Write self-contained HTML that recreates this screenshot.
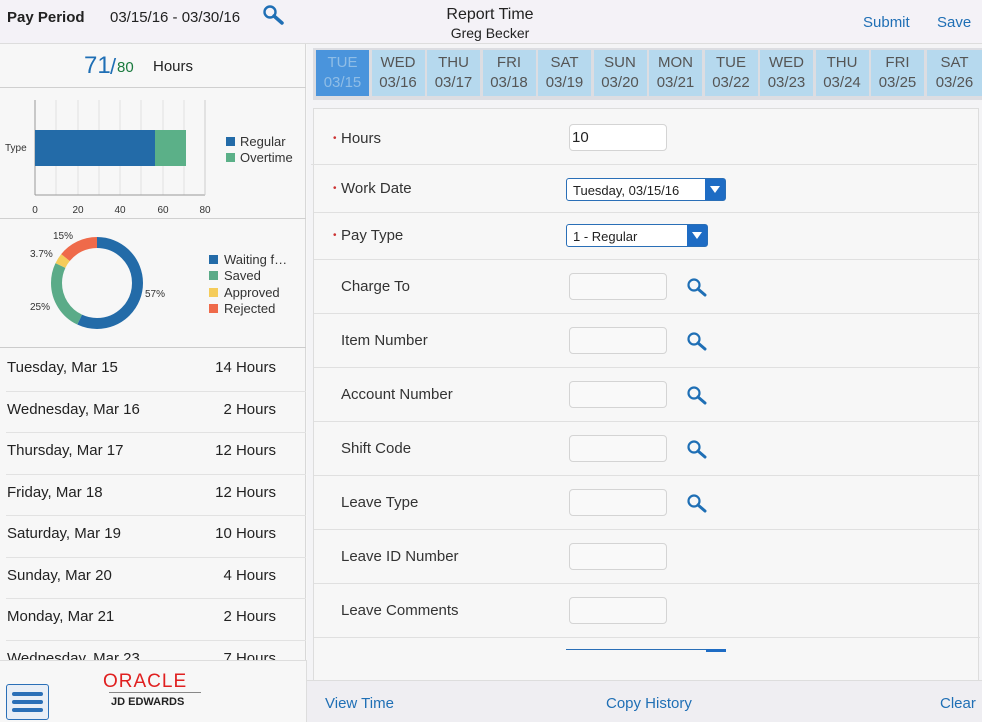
<!DOCTYPE html>
<html><head><meta charset="utf-8"><style>
*{margin:0;padding:0;box-sizing:border-box}
body{width:982px;height:722px;overflow:hidden;background:#f7f7f7;font-family:"Liberation Sans",Arial,sans-serif;color:#222;position:relative}
.a{position:absolute}
.hdr{left:0;top:0;width:982px;height:44px;background:#f4f2f7;border-bottom:1px solid #ddd}
.left{left:0;top:44px;width:306px;height:616px;background:#f7f7f7;border-right:1px solid #d8d8d8}
.row{position:absolute;left:0;width:306px;height:41.5px;font-size:15px}
.row span{position:absolute;top:9px}
.row:after{content:"";position:absolute;left:6px;right:0;bottom:0;border-bottom:1px solid #e2e2e2}
.tile{position:absolute;top:50px;width:53px;height:46px;background:#b6d9ee;color:#555;font-size:15px;text-align:center;line-height:20px;padding-top:3px}
.form{left:313px;top:108px;width:666px;height:580px;border:1px solid #ddd;border-bottom:none;background:#f7f7f7}
.fl{position:absolute;left:27px;font-size:15px;color:#333}
.req{position:absolute;left:19px;color:#c33;font-size:10px}
.sep{position:absolute;left:0;width:666px;border-top:1px solid #e0e0e0}
.inp{position:absolute;left:255px;width:98px;height:27px;border:1px solid #d4d4d4;border-radius:4px;background:#f9f9f9}
.sel{position:absolute;left:252px;height:23px;border:1px solid #2a6fb7;border-radius:3px;background:#fff;font-size:13px;padding:4px 6px}
.sel b{position:absolute;right:0;top:0;width:20px;height:21px;background:#1e6cc4}
.sel b:after{content:"";position:absolute;left:5px;top:7px;border-left:5px solid transparent;border-right:5px solid transparent;border-top:7px solid #fff}
.srch{position:absolute;left:372px}
.foot{left:307px;top:680px;width:675px;height:42px;background:#efeef2;border-top:1px solid #ddd}
.foot span{position:absolute;top:14px;color:#1f6fb5;font-size:15px}
</style></head><body>
<div class="a hdr">
 <div class="a" style="left:7px;top:9px;font-size:15px;font-weight:bold">Pay Period</div>
 <div class="a" style="left:110px;top:9px;font-size:15px">03/15/16 - 03/30/16</div>
 <svg class="a" style="left:262px;top:4px" width="24" height="22"><circle cx="8" cy="8" r="5.5" fill="none" stroke="#1f6fb5" stroke-width="2.4"/><line x1="12" y1="12" x2="20" y2="19" stroke="#1f6fb5" stroke-width="3.5" stroke-linecap="round"/></svg>
 <div class="a" style="left:390px;top:5px;width:200px;text-align:center;font-size:16px;line-height:19px">Report Time<br><span style="font-size:14px">Greg Becker</span></div>
 <div class="a" style="left:863px;top:14px;font-size:15px;color:#1f6fb5">Submit</div>
 <div class="a" style="left:937px;top:14px;font-size:15px;color:#1f6fb5">Save</div>
</div>
<div class="a left">
 <div class="a" style="left:0;top:0;width:306px;height:44px;border-bottom:1px solid #d0d0d0">
  <span class="a" style="left:84px;top:8px;font-size:24px;color:#1f6fb5">71</span><span class="a" style="left:110px;top:10px;font-size:22px;color:#1f6fb5">/</span><span class="a" style="left:117px;top:15px;font-size:15px;color:#1a7a3e">80</span>
  <span class="a" style="left:153px;top:14px;font-size:15px">Hours</span>
 </div>
 <svg class="a" style="left:0;top:0" width="306" height="176">
  <g stroke="#e2e2e2"><line x1="56" y1="56" x2="56" y2="151"/><line x1="78" y1="56" x2="78" y2="151"/><line x1="99" y1="56" x2="99" y2="151"/><line x1="120" y1="56" x2="120" y2="151"/><line x1="141" y1="56" x2="141" y2="151"/><line x1="163" y1="56" x2="163" y2="151"/><line x1="184" y1="56" x2="184" y2="151"/></g>
  <line x1="35" y1="56" x2="35" y2="151" stroke="#999"/><line x1="35" y1="151" x2="205" y2="151" stroke="#999"/><line x1="205" y1="56" x2="205" y2="151" stroke="#ccc"/>
  <rect x="35" y="86" width="120" height="36" fill="#236ba8"/><rect x="155" y="86" width="31" height="36" fill="#5bb088"/>
  <g font-size="10" fill="#333" text-anchor="middle"><text x="35" y="169">0</text><text x="78" y="169">20</text><text x="120" y="169">40</text><text x="163" y="169">60</text><text x="205" y="169">80</text></g>
  <text x="5" y="107" font-size="10" fill="#333">Type</text>
  <rect x="226" y="93" width="9" height="9" fill="#236ba8"/><text x="240" y="102" font-size="13" fill="#333">Regular</text>
  <rect x="226" y="109" width="9" height="9" fill="#5bb088"/><text x="240" y="118" font-size="13" fill="#333">Overtime</text>
  <line x1="0" y1="174.5" x2="306" y2="174.5" stroke="#d0d0d0"/>
 </svg>
 <svg class="a" style="left:0;top:174px" width="306" height="130">
  <g transform="rotate(-90 97 65)" fill="none" stroke-width="11">
   <circle cx="97" cy="65" r="40.5" stroke="#236ba8" stroke-dasharray="145 300"/>
   <circle cx="97" cy="65" r="40.5" stroke="#5bab88" stroke-dasharray="0 145 63.6 300"/>
   <circle cx="97" cy="65" r="40.5" stroke="#f5cc5a" stroke-dasharray="0 208.6 9.4 300"/>
   <circle cx="97" cy="65" r="40.5" stroke="#ef6a4a" stroke-dasharray="0 218 36.5 300"/>
  </g>
  <g font-size="10" fill="#333"><text x="53" y="21">15%</text><text x="30" y="39">3.7%</text><text x="145" y="79">57%</text><text x="30" y="92">25%</text></g>
  <rect x="209" y="37" width="9" height="9" fill="#236ba8"/><text x="224" y="46" font-size="13" fill="#333">Waiting f…</text>
  <rect x="209" y="53" width="9" height="9" fill="#5bab88"/><text x="224" y="62" font-size="13" fill="#333">Saved</text>
  <rect x="209" y="70" width="9" height="9" fill="#f5cc5a"/><text x="224" y="79" font-size="13" fill="#333">Approved</text>
  <rect x="209" y="86" width="9" height="9" fill="#ef6a4a"/><text x="224" y="95" font-size="13" fill="#333">Rejected</text>
 </svg>
 <div class="a" style="left:0;top:303px;width:306px;border-top:1px solid #ccc"></div>
 <div class="row" style="top:306px"><span style="left:7px">Tuesday, Mar 15</span><span style="right:30px">14 Hours</span></div>
 <div class="row" style="top:347.5px"><span style="left:7px">Wednesday, Mar 16</span><span style="right:30px">2 Hours</span></div>
 <div class="row" style="top:389px"><span style="left:7px">Thursday, Mar 17</span><span style="right:30px">12 Hours</span></div>
 <div class="row" style="top:430.5px"><span style="left:7px">Friday, Mar 18</span><span style="right:30px">12 Hours</span></div>
 <div class="row" style="top:472px"><span style="left:7px">Saturday, Mar 19</span><span style="right:30px">10 Hours</span></div>
 <div class="row" style="top:513.5px"><span style="left:7px">Sunday, Mar 20</span><span style="right:30px">4 Hours</span></div>
 <div class="row" style="top:555px"><span style="left:7px">Monday, Mar 21</span><span style="right:30px">2 Hours</span></div>
 <div class="row" style="top:596.5px"><span style="left:7px">Wednesday, Mar 23</span><span style="right:30px">7 Hours</span></div>
</div>
<div class="a" style="left:0;top:660px;width:307px;height:62px;background:#f7f7f7;border-top:1px solid #ddd;border-right:1px solid #ddd">
 <div class="a" style="left:6px;top:23px;width:43px;height:36px;border:1px solid #2a6fb7;border-radius:3px;background:#e8eef6">
  <div class="a" style="left:5px;top:7px;width:31px;height:4px;background:#2a6fb7;border-radius:2px"></div>
  <div class="a" style="left:5px;top:15px;width:31px;height:4px;background:#2a6fb7;border-radius:2px"></div>
  <div class="a" style="left:5px;top:23px;width:31px;height:4px;background:#2a6fb7;border-radius:2px"></div>
 </div>
 <div class="a" style="left:103px;top:10px;font-size:19px;color:#e02020;letter-spacing:1px">ORACLE</div>
 <div class="a" style="left:109px;top:31px;width:92px;border-top:1px solid #888"></div>
 <div class="a" style="left:111px;top:35px;font-size:11px;font-weight:bold">JD EDWARDS</div>
</div>
<div class="a" style="left:307px;top:44px;width:675px;height:636px;background:#f4f4f6"></div>
<div class="a" style="left:313px;top:48px;width:669px;height:52px;background:#dcdde2"></div>
<div class="tile" style="left:316px;background:#4a94dc;color:#8fbde6">TUE<br>03/15</div>
<div class="tile" style="left:371.5px">WED<br>03/16</div>
<div class="tile" style="left:427px">THU<br>03/17</div>
<div class="tile" style="left:482.5px">FRI<br>03/18</div>
<div class="tile" style="left:538px">SAT<br>03/19</div>
<div class="tile" style="left:593.5px">SUN<br>03/20</div>
<div class="tile" style="left:649px">MON<br>03/21</div>
<div class="tile" style="left:704.5px">TUE<br>03/22</div>
<div class="tile" style="left:760px">WED<br>03/23</div>
<div class="tile" style="left:815.5px">THU<br>03/24</div>
<div class="tile" style="left:871px">FRI<br>03/25</div>
<div class="tile" style="left:926.5px;width:56px">SAT<br>03/26</div>
<div class="a form">
 <span class="req" style="top:24px">•</span><span class="fl" style="top:21px">Hours</span>
 <div class="inp" style="top:15px;left:255px;background:#fff;font-size:15px;padding:4px 2px">10</div>
 <div class="sep" style="left:-3px;top:55px"></div>
 <span class="req" style="top:74px">•</span><span class="fl" style="top:71px">Work Date</span>
 <div class="sel" style="top:69px;width:160px">Tuesday, 03/15/16<b></b></div>
 <div class="sep" style="top:103px"></div>
 <span class="req" style="top:121px">•</span><span class="fl" style="top:118px">Pay Type</span>
 <div class="sel" style="top:115px;width:142px">1 - Regular<b></b></div>
 <div class="sep" style="top:150px"></div>
 <span class="fl" style="top:169px">Charge To</span><div class="inp" style="top:164px"></div>
 <svg class="srch" style="top:168px" width="24" height="22"><circle cx="8" cy="8" r="5.5" fill="none" stroke="#1f6fb5" stroke-width="2.2"/><line x1="12" y1="12" x2="19" y2="18" stroke="#1f6fb5" stroke-width="3" stroke-linecap="round"/></svg>
 <div class="sep" style="top:204px"></div>
 <span class="fl" style="top:223px">Item Number</span><div class="inp" style="top:218px"></div>
 <svg class="srch" style="top:222px" width="24" height="22"><circle cx="8" cy="8" r="5.5" fill="none" stroke="#1f6fb5" stroke-width="2.2"/><line x1="12" y1="12" x2="19" y2="18" stroke="#1f6fb5" stroke-width="3" stroke-linecap="round"/></svg>
 <div class="sep" style="top:258px"></div>
 <span class="fl" style="top:277px">Account Number</span><div class="inp" style="top:272px"></div>
 <svg class="srch" style="top:276px" width="24" height="22"><circle cx="8" cy="8" r="5.5" fill="none" stroke="#1f6fb5" stroke-width="2.2"/><line x1="12" y1="12" x2="19" y2="18" stroke="#1f6fb5" stroke-width="3" stroke-linecap="round"/></svg>
 <div class="sep" style="top:312px"></div>
 <span class="fl" style="top:331px">Shift Code</span><div class="inp" style="top:326px"></div>
 <svg class="srch" style="top:330px" width="24" height="22"><circle cx="8" cy="8" r="5.5" fill="none" stroke="#1f6fb5" stroke-width="2.2"/><line x1="12" y1="12" x2="19" y2="18" stroke="#1f6fb5" stroke-width="3" stroke-linecap="round"/></svg>
 <div class="sep" style="top:366px"></div>
 <span class="fl" style="top:385px">Leave Type</span><div class="inp" style="top:380px"></div>
 <svg class="srch" style="top:384px" width="24" height="22"><circle cx="8" cy="8" r="5.5" fill="none" stroke="#1f6fb5" stroke-width="2.2"/><line x1="12" y1="12" x2="19" y2="18" stroke="#1f6fb5" stroke-width="3" stroke-linecap="round"/></svg>
 <div class="sep" style="top:420px"></div>
 <span class="fl" style="top:439px">Leave ID Number</span><div class="inp" style="top:434px"></div>
 <div class="sep" style="top:474px"></div>
 <span class="fl" style="top:493px">Leave Comments</span><div class="inp" style="top:488px"></div>
 <div class="sep" style="top:528px"></div>
 <div class="a" style="left:252px;top:540px;width:160px;height:3px;border-top:1px solid #2a6fb7"></div>
 <div class="a" style="left:392px;top:540px;width:20px;height:3px;background:#1e6cc4"></div>
</div>
<div class="a foot">
 <span style="left:18px">View Time</span><span style="left:299px">Copy History</span><span style="left:633px">Clear</span>
</div>
</body></html>
